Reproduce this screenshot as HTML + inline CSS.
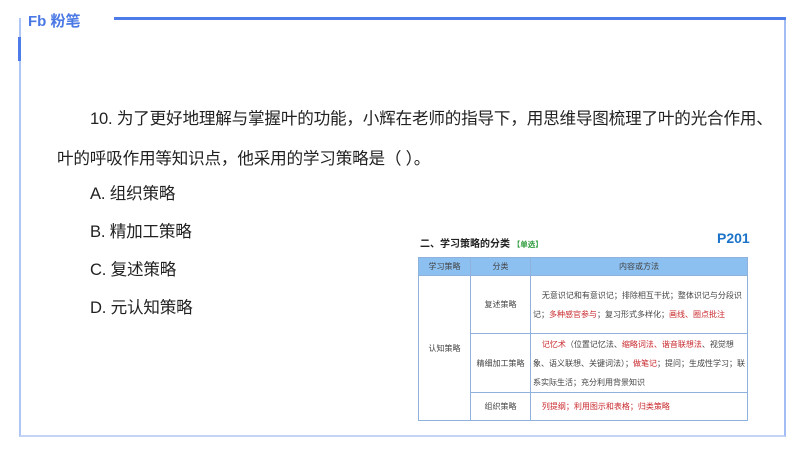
<!DOCTYPE html>
<html><head><meta charset="utf-8"><style>
*{margin:0;padding:0;box-sizing:border-box}
body{width:800px;height:450px;background:#fff;position:relative;overflow:hidden;font-family:"Liberation Sans","Noto Sans CJK SC",sans-serif;color:#222}
.frame{position:absolute;left:19px;top:18px;width:767px;height:419px;border:2px solid #c3d4f7;border-top:none;border-left-color:#b0c6f5;border-right-color:#a3bcf3}
.hline{position:absolute;left:114px;top:17px;width:672px;height:3px;background:#4d7ce8}
.lbar{position:absolute;left:18px;top:37px;width:3px;height:24px;background:#4d7ce8}
.logo{position:absolute;left:28px;top:10px;font-weight:bold;color:#4a78e4;font-size:15px}
.t{position:absolute;font-size:16.6px;color:#222;white-space:nowrap;letter-spacing:-0.2px}
table{position:absolute;left:418px;top:257px;width:330px;border-collapse:collapse;font-size:8px;color:#444}
td,th{border:1px solid #8fb2dc;text-align:center;font-weight:normal}
th{background:#8cc0f0;height:18px}
.r{color:#c8282c}
.c{text-align:left;padding:0 2px;line-height:19px}
</style></head><body>
<div class="frame"></div>
<div class="hline"></div>
<div class="lbar"></div>
<div class="logo">Fb 粉笔</div>
<div class="t" style="left:90px;top:105px">10. 为了更好地理解与掌握叶的功能，小辉在老师的指导下，用思维导图梳理了叶的光合作用、</div>
<div class="t" style="left:57px;top:145px">叶的呼吸作用等知识点，他采用的学习策略是（ ）。</div>
<div class="t" style="left:90px;top:180px">A. 组织策略</div>
<div class="t" style="left:90px;top:218px">B. 精加工策略</div>
<div class="t" style="left:90px;top:256px">C. 复述策略</div>
<div class="t" style="left:90px;top:294px">D. 元认知策略</div>
<div style="position:absolute;left:420px;top:235px;font-size:10px;font-weight:bold;color:#222">二、学习策略的分类 <span style="color:#2a9a3a;font-size:7.5px">【单选】</span></div>
<div style="position:absolute;left:717px;top:230px;font-size:14px;font-weight:bold;color:#1a73c8">P201</div>
<table>
<tr><th style="width:52px">学习策略</th><th style="width:60px">分类</th><th>内容或方法</th></tr>
<tr><td rowspan="3">认知策略</td><td style="height:58px">复述策略</td><td class="c">&nbsp;&nbsp;&nbsp;&nbsp;无意识记和有意识记；排除相互干扰；整体识记与分段识记；<span class="r">多种感官参与</span>；复习形式多样化；<span class="r">画线、圈点批注</span></td></tr>
<tr><td style="height:59px">精细加工策略</td><td class="c" style="line-height:19px">&nbsp;&nbsp;&nbsp;&nbsp;<span class="r">记忆术</span>（位置记忆法、<span class="r">缩略词法、谐音联想法</span>、视觉想象、语义联想、关键词法）；<span class="r">做笔记</span>；提问；生成性学习；联系实际生活；充分利用背景知识</td></tr>
<tr><td style="height:28px">组织策略</td><td class="c">&nbsp;&nbsp;&nbsp;&nbsp;<span class="r">列提纲；利用图示和表格；归类策略</span></td></tr>
</table>
</body></html>
